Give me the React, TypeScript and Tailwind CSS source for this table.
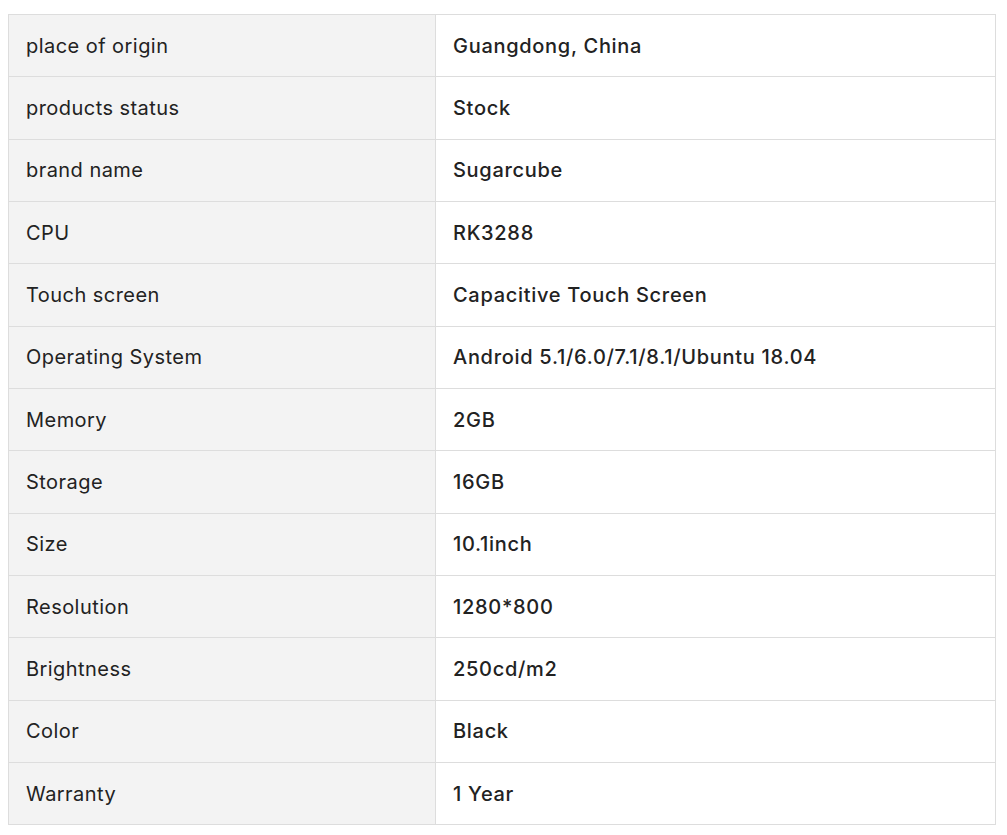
import React from 'react';

const specs: [string, string][] = [
  ['place of origin', 'Guangdong, China'],
  ['products status', 'Stock'],
  ['brand name', 'Sugarcube'],
  ['CPU', 'RK3288'],
  ['Touch screen', 'Capacitive Touch Screen'],
  ['Operating System', 'Android 5.1/6.0/7.1/8.1/Ubuntu 18.04'],
  ['Memory', '2GB'],
  ['Storage', '16GB'],
  ['Size', '10.1inch'],
  ['Resolution', '1280*800'],
  ['Brightness', '250cd/m2'],
  ['Color', 'Black'],
  ['Warranty', '1 Year'],
];

const App = () => {
  return (
    <div className="bg-white px-[8px] pt-[14px] font-['Inter',sans-serif] text-[#222222]">
      <table className="w-[988px] border-collapse border border-[#dddddd] text-[20px]">
        <tbody>
          {specs.map(([label, value]) => (
            <tr key={label} className="h-[62.33px]">
              <td className="w-[427px] border border-[#dddddd] bg-[#f3f3f3] px-[17px] py-0 leading-[30px] tracking-[0.45px]">
                {label}
              </td>
              <td className="border border-[#dddddd] px-[17px] py-0 font-medium leading-[30px] tracking-[0.7px]">
                {value}
              </td>
            </tr>
          ))}
        </tbody>
      </table>
    </div>
  );
};

export default App;
